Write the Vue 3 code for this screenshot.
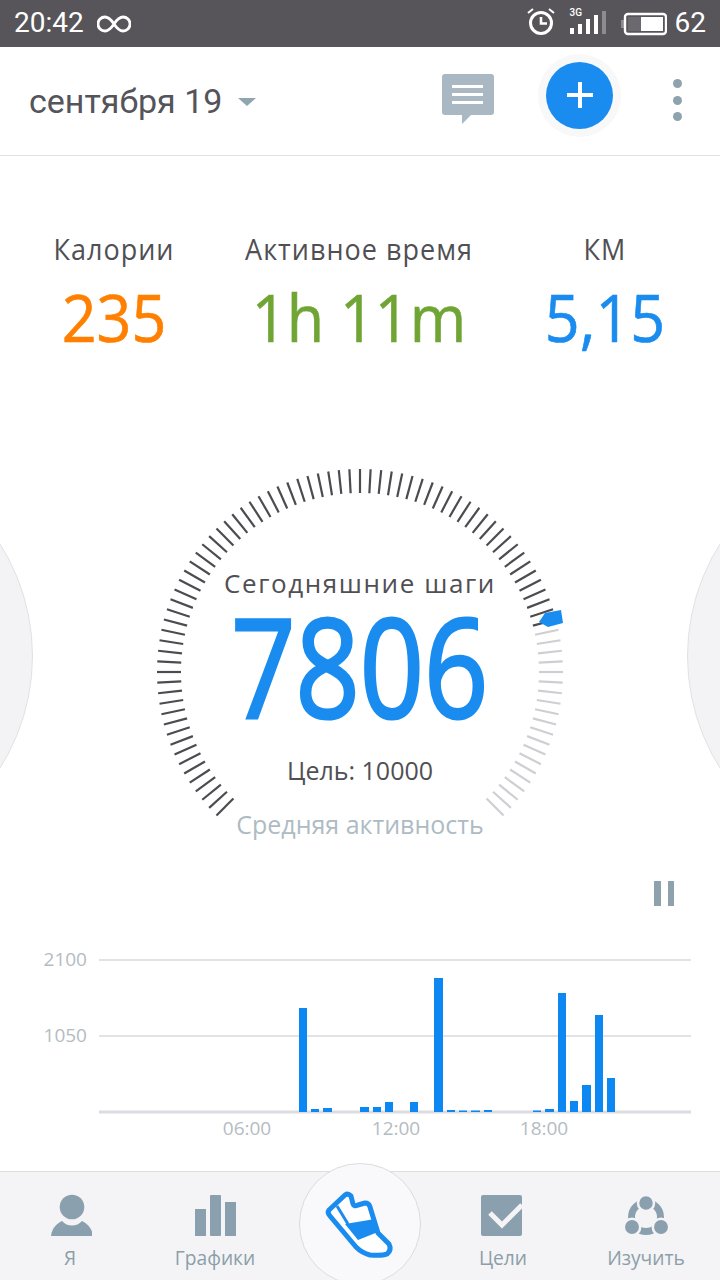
<script setup>
const cx = 206, cy = 206, rOut = 203, rIn = 179
const ticks = Array.from({ length: 91 }, (_, i) => {
  const a = ((225 + i * 3) * Math.PI) / 180
  const s = Math.sin(a), c = Math.cos(a)
  return {
    x1: cx + rIn * s, y1: cy - rIn * c,
    x2: cx + rOut * s, y2: cy - rOut * c,
    on: i <= 70
  }
})
const bars = [
  [299, 8, 1008], [311, 8, 1109], [323, 9, 1108], [360, 9, 1107], [373, 8, 1107],
  [385, 8, 1102], [410, 8, 1102], [434, 9, 978], [447, 8, 1110], [459, 8, 1110.500],
  [471, 9, 1110.500], [484, 8, 1110], [533, 8, 1110.500], [545, 9, 1109], [558, 8, 993],
  [570, 8, 1101], [582, 9, 1085], [595, 8, 1015], [607, 8, 1078]
].map(([x, w, t]) => ({ x, w, y: t, h: 1112 - t }))
const signal = [[0, 27], [8, 23], [16, 18], [24, 14], [32, 10]]
const stats = [
  { label: 'Калории', value: '235', cls: 'orange' },
  { label: 'Активное время', value: '1h 11m', cls: 'green' },
  { label: 'КМ', value: '5,15', cls: 'blue' }
]
</script>

<template>
  <div class="screen">
    <div class="status">
      <span class="clock">20:42</span>
      <svg class="inf" width="34" height="20" viewBox="0 0 34 20">
        <path d="M17 10C13 4 10 3 8 3a7 7 0 0 0 0 14c2 0 5-1 9-7s7-7 9-7a7 7 0 0 1 0 14c-2 0-5-1-9-7z" fill="none" stroke="#fff" stroke-width="2.800" />
      </svg>
      <svg class="alarm" width="30" height="30" viewBox="0 0 30 30">
        <circle cx="15" cy="16" r="10.500" fill="none" stroke="#fff" stroke-width="3" />
        <path d="M15 10v6.500h6" fill="none" stroke="#fff" stroke-width="2.600" />
        <path d="M2 6l5-4M28 6l-5-4" fill="none" stroke="#fff" stroke-width="2" />
      </svg>
      <div class="signal">
        <span class="g3">3G</span>
        <svg width="38" height="26" viewBox="0 0 38 26">
          <rect v-for="(b, i) in signal" :key="i" :x="b[0]" :y="b[1] - 10" width="4" :height="33 - b[1]" :fill="i === 4 ? '#8d8b90' : '#fff'" />
        </svg>
      </div>
      <svg class="batt" width="46" height="24" viewBox="0 0 46 24">
        <rect x="0" y="8" width="3" height="8" fill="#8d8b90" />
        <rect x="4" y="2" width="41" height="20" rx="3" fill="none" stroke="#fff" stroke-width="2.400" />
        <rect x="7" y="5" width="13" height="14" fill="#6b696e" />
        <rect x="20" y="5" width="22" height="14" fill="#fff" />
      </svg>
      <span class="pct">62</span>
    </div>

    <header class="head">
      <span class="date">сентября 19</span>
      <span class="caret"></span>
      <svg class="comment" width="52" height="50" viewBox="0 0 52 50">
        <path d="M3 0h46a3 3 0 0 1 3 3v35a3 3 0 0 1-3 3H29l-9 9v-9H3a3 3 0 0 1-3-3V3a3 3 0 0 1 3-3z" fill="#a9b8c2" />
        <path d="M10 12.500h31M10 20.500h31M10 28.500h31" stroke="#fff" stroke-width="3" />
      </svg>
      <div class="fab">
        <svg width="26" height="26" viewBox="0 0 26 26"><path d="M0 13h26M13 0v26" stroke="#fff" stroke-width="4" /></svg>
      </div>
      <div class="dots"><i></i><i></i><i></i></div>
    </header>

    <section class="stats">
      <div v-for="s in stats" :key="s.label" class="stat">
        <div class="stat-label">{{ s.label }}</div>
        <div class="stat-value" :class="s.cls">{{ s.value }}</div>
      </div>
    </section>

    <section class="stage">
      <div class="side left"></div>
      <div class="side right"></div>
      <div class="gauge">
        <svg class="ring" width="412" height="412" viewBox="0 0 412 412">
          <line v-for="(t, i) in ticks" :key="i" :x1="t.x1" :y1="t.y1" :x2="t.x2" :y2="t.y2" :stroke="t.on ? '#4c4b50' : '#cfcfd3'" stroke-width="2.200" />
          <path d="M385 156l6-9 16-3 2 13-15 4z" fill="#1a8cf0" />
        </svg>
        <div class="today">Сегодняшние шаги</div>
        <div class="steps">7806</div>
        <div class="goal">Цель: 10000</div>
        <div class="mode">Средняя активность</div>
      </div>
    </section>

    <div class="pause-row">
      <span class="pause"><i></i><i></i></span>
    </div>

    <svg class="chart" width="720" height="200" viewBox="0 940 720 200">
      <line x1="99" x2="691" y1="960" y2="960" stroke="#e3e3e7" stroke-width="2" />
      <line x1="99" x2="691" y1="1036" y2="1036" stroke="#e3e3e7" stroke-width="2" />
      <line x1="99" x2="691" y1="1112" y2="1112" stroke="#dcdbdf" stroke-width="3" />
      <rect v-for="(b, i) in bars" :key="i" :x="b.x" :y="b.y" :width="b.w" :height="b.h" fill="#0d88f2" />
      <text class="ct" x="87" y="966" text-anchor="end">2100</text>
      <text class="ct" x="87" y="1042" text-anchor="end">1050</text>
      <text class="ct" x="247" y="1135" text-anchor="middle">06:00</text>
      <text class="ct" x="396" y="1135" text-anchor="middle">12:00</text>
      <text class="ct" x="544" y="1135" text-anchor="middle">18:00</text>
    </svg>

    <nav class="nav">
      <div class="tab">
        <svg width="44" height="44" viewBox="0 0 44 44">
          <circle cx="24" cy="13" r="12.300" fill="#8ba0ae" />
          <path d="M3 42c1-9 7-13 11-15 3 3 6 4.500 10 4.500s7-1.500 10-4.500c4 2 10 6 11 15z" fill="#8ba0ae" />
        </svg>
        <span>Я</span>
      </div>
      <div class="tab">
        <svg width="44" height="44" viewBox="0 0 44 44">
          <rect x="2" y="15" width="11" height="27" fill="#8ba0ae" />
          <rect x="17" y="1" width="11" height="41" rx="1" fill="#8ba0ae" />
          <rect x="32" y="8" width="11" height="34" fill="#8ba0ae" />
        </svg>
        <span>Графики</span>
      </div>
      <div class="tab center">
        <div class="shoe-disc">
          <svg width="140" height="120" viewBox="0 0 140 120">
            <path d="M39 50L55 35Q58 33 61 36L63 44Q64 47 68 45L75 43Q79 43 80 47L84 60L88 73L99 84Q102 90 97 94Q92 96 80 95Q72 93 66 87L40 56Q37 53 39 50Z" fill="#fff" stroke="#1a8cf0" stroke-width="5" stroke-linejoin="round" />
            <path d="M55 64L85 59L88 72L68 80Z" fill="#1a8cf0" />
            <path d="M47 46L58 64" stroke="#1a8cf0" stroke-width="3" />
          </svg>
        </div>
      </div>
      <div class="tab">
        <svg width="44" height="44" viewBox="0 0 44 44">
          <rect x="0" y="1" width="41" height="41" rx="2" fill="#8ba0ae" />
          <path d="M9 19l12 12 20-20" fill="none" stroke="#f4f4f6" stroke-width="5" />
        </svg>
        <span>Цели</span>
      </div>
      <div class="tab">
        <svg width="44" height="44" viewBox="0 0 44 44">
          <circle cx="22" cy="23" r="14.500" fill="none" stroke="#8ba0ae" stroke-width="7" />
          <g fill="#8ba0ae" stroke="#f4f4f6" stroke-width="2.500">
            <circle cx="22" cy="9" r="8" />
            <circle cx="8" cy="33" r="8.200" />
            <circle cx="37" cy="33" r="8.200" />
          </g>
        </svg>
        <span>Изучить</span>
      </div>
    </nav>
  </div>
</template>

<style>
html, body { margin: 0; background: #fff; }
</style>

<style scoped>
.screen {
  width: 720px; height: 1280px; overflow: hidden; position: relative;
  display: flex; flex-direction: column; background: #fff;
  font-family: "Open Sans", sans-serif; color: #504f54;
}
.status {
  height: 47px; flex: none; background: #57555a; color: #fff;
  display: flex; align-items: center; padding: 0 14px; box-sizing: border-box;
  font-family: Roboto, sans-serif; font-size: 28px;
}
.clock { width: 69px; margin-top: -2px; }
.inf { margin-left: 14px; }
.alarm { margin-left: auto; margin-top: -3px; }
.signal { position: relative; margin-left: 14px; width: 38px; height: 26px; margin-right: -1px; }
.signal svg { display: block; }
.g3 { position: absolute; left: 0; top: -3px; font-size: 10px; line-height: 10px; font-weight: 500; }
.batt { margin-left: 14px; }
.pct { margin-left: 8px; margin-top: -2px; }

.head {
  height: 108px; flex: none; border-bottom: 1px solid #e2e2e4;
  display: flex; align-items: center; padding: 0 0 0 29px; box-sizing: content-box;
  font-family: Roboto, sans-serif;
}
.date { font-size: 34px; color: #54545a; width: 209px; white-space: nowrap; }
.caret {
  width: 0; height: 0; border-left: 9px solid transparent; border-right: 9px solid transparent;
  border-top: 8px solid #8fa5b0; margin-top: 2px;
}
.comment { margin-left: 186px; margin-top: -4px; }
.fab {
  width: 67px; height: 67px; border-radius: 50%; background: #1a8cf0; margin-left: 52px; margin-top: -12px;
  box-shadow: 0 0 0 8px #f8f8f9;
  display: flex; align-items: center; justify-content: center;
}
.dots { display: flex; flex-direction: column; gap: 7.500px; margin-left: 60px; margin-top: -2px; }
.dots i { width: 9px; height: 9px; border-radius: 50%; background: #8fa3ae; display: block; }

.stats {
  display: grid; grid-template-columns: 228px 262px 230px; padding-top: 75px; flex: none;
}
.stat { text-align: center; }
.stat-label {
  font-size: 27px; line-height: 36px; letter-spacing: 1px; white-space: nowrap;
  transform: scaleY(1.08);
}
.stat-value {
  font-size: 61px; line-height: 68px; margin-top: 16px; white-space: nowrap;
  -webkit-text-stroke: 0.6px currentColor;
  transform: scaleY(1.08);
}
.orange { color: #ff8000; }
.green { color: #70a536; }
.blue { color: #1a8cf0; }

.stage {
  position: absolute; left: 0; top: 466px; width: 720px; height: 412px;
  display: flex; justify-content: center;
}
.side {
  position: absolute; top: -20px; width: 420px; height: 420px; border-radius: 50%;
  background: #f3f2f4; border: 1px solid #e2e2e4; box-sizing: border-box;
}
.side.left { left: -387px; }
.side.right { right: -387px; }
.gauge {
  position: relative; width: 412px; height: 412px;
  display: flex; flex-direction: column; align-items: center;
}
.ring { position: absolute; left: 0; top: 0; }
.today {
  margin-top: 99px; font-size: 26px; line-height: 36px; letter-spacing: 1.600px; white-space: nowrap;
}
.steps {
  margin-top: -1px; font-size: 137px; line-height: 130px; color: #1a8cf0;
  -webkit-text-stroke: 3px currentColor;
  transform: scaleX(0.82);
}
.goal { margin-top: 23px; font-size: 25px; line-height: 34px; white-space: nowrap; }
.mode { margin-top: 20px; font-size: 25px; line-height: 34px; color: #aebbc3; white-space: nowrap; }

.pause-row {
  position: absolute; left: 654px; top: 881px;
}
.pause { display: flex; gap: 7px; }
.pause i { width: 6.500px; height: 25px; background: #8ea2ad; display: block; }

.chart { position: absolute; left: 0; top: 940px; display: block; }
.ct { font-family: "Open Sans", sans-serif; font-size: 19px; fill: #b4bcc2; }

.nav {
  position: absolute; left: 0; right: 0; top: 1171px; height: 109px;
  border-top: 1px solid #dededf; background: #f4f4f6; box-sizing: border-box;
  display: grid; grid-template-columns: 140px 150px 140px 146px 140px;
}
.tab {
  display: flex; flex-direction: column; align-items: center; padding-top: 22px;
  font-size: 19.200px; line-height: 26px; color: #8c9ea9;
}
.tab svg { display: block; }
.tab span { margin-top: 7px; white-space: nowrap; }
.center { padding-top: 0; position: relative; }
.shoe-disc {
  position: absolute; left: 9px; top: -9px; width: 122px; height: 122px; border-radius: 50%;
  background: #f9f9fb; border: 1px solid #dcdce0; box-sizing: border-box;
}
.shoe-disc svg { position: absolute; left: -10px; top: -4px; }
</style>
